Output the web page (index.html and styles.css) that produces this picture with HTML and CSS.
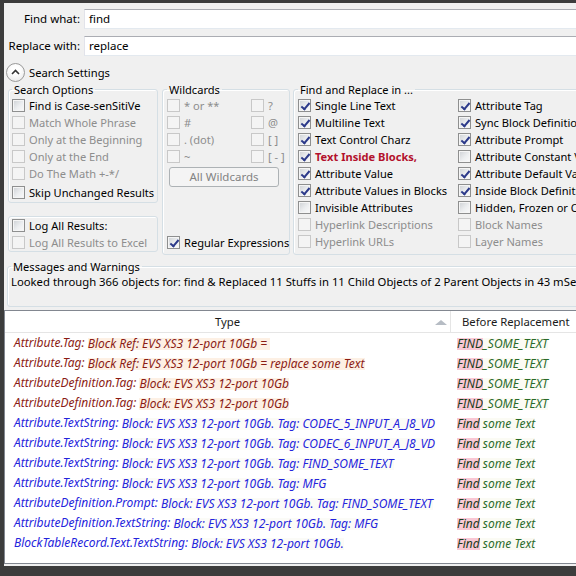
FILE: index.html
```html
<!DOCTYPE html>
<html>
<head>
<meta charset="utf-8">
<link rel="stylesheet" href="styles.css">
</head>
<body>
<div class="win">
  <div class="form">
    <div class="frow"><span class="lbl">Find what:</span><div class="input">find</div></div>
    <div class="frow"><span class="lbl">Replace with:</span><div class="input">replace</div></div>
    <div class="settings">
      <span class="circ"><svg width="9" height="6" viewBox="0 0 9 6"><polyline points="1,5 4.5,1.5 8,5" fill="none" stroke="#333" stroke-width="1.6"/></svg></span>
      <span>Search Settings</span>
    </div>
    <div class="groups">
      <div class="col1">
        <fieldset class="grp so">
          <legend>Search Options</legend>
          <div class="cbr"><span class="cb"></span><span>Find is Case-senSitiVe</span></div>
          <div class="cbr dis"><span class="cb"></span><span>Match Whole Phrase</span></div>
          <div class="cbr dis"><span class="cb"></span><span>Only at the Beginning</span></div>
          <div class="cbr dis"><span class="cb"></span><span>Only at the End</span></div>
          <div class="cbr dis"><span class="cb"></span><span>Do The Math +-*/</span></div>
          <div class="cbr skip"><span class="cb"></span><span>Skip Unchanged Results</span></div>
        </fieldset>
        <fieldset class="grp log">
          <div class="cbr"><span class="cb"></span><span>Log All Results:</span></div>
          <div class="cbr dis"><span class="cb"></span><span>Log All Results to Excel</span></div>
        </fieldset>
      </div>
      <fieldset class="grp wc">
        <legend>Wildcards</legend>
        <div class="wgrid">
          <div class="cbr dis"><span class="cb"></span><span>* or **</span></div>
          <div class="cbr dis"><span class="cb"></span><span>?</span></div>
          <div class="cbr dis"><span class="cb"></span><span>#</span></div>
          <div class="cbr dis"><span class="cb"></span><span>@</span></div>
          <div class="cbr dis"><span class="cb"></span><span>. (dot)</span></div>
          <div class="cbr dis"><span class="cb"></span><span>[ ]</span></div>
          <div class="cbr dis"><span class="cb"></span><span>~</span></div>
          <div class="cbr dis"><span class="cb"></span><span>[ - ]</span></div>
        </div>
        <div class="btn">All Wildcards</div>
        <div class="cbr regex"><span class="cb on"></span><span>Regular Expressions</span></div>
      </fieldset>
      <fieldset class="grp fr">
        <legend>Find and Replace in ...</legend>
        <div class="fgrid">
          <div class="cbr"><span class="cb on"></span><span>Single Line Text</span></div>
          <div class="cbr"><span class="cb on"></span><span>Attribute Tag</span></div>
          <div class="cbr"><span class="cb on"></span><span>Multiline Text</span></div>
          <div class="cbr"><span class="cb on"></span><span>Sync Block Definitions</span></div>
          <div class="cbr"><span class="cb on"></span><span>Text Control Charz</span></div>
          <div class="cbr"><span class="cb on"></span><span>Attribute Prompt</span></div>
          <div class="cbr hot"><span class="cb on"></span><span>Text Inside Blocks,</span></div>
          <div class="cbr"><span class="cb"></span><span>Attribute Constant Values</span></div>
          <div class="cbr"><span class="cb on"></span><span>Attribute Value</span></div>
          <div class="cbr"><span class="cb on"></span><span>Attribute Default Values</span></div>
          <div class="cbr"><span class="cb on"></span><span>Attribute Values in Blocks</span></div>
          <div class="cbr"><span class="cb on"></span><span>Inside Block Definitions</span></div>
          <div class="cbr"><span class="cb"></span><span>Invisible Attributes</span></div>
          <div class="cbr"><span class="cb"></span><span>Hidden, Frozen or Off Layers</span></div>
          <div class="cbr dis"><span class="cb"></span><span>Hyperlink Descriptions</span></div>
          <div class="cbr dis"><span class="cb"></span><span>Block Names</span></div>
          <div class="cbr dis"><span class="cb"></span><span>Hyperlink URLs</span></div>
          <div class="cbr dis"><span class="cb"></span><span>Layer Names</span></div>
        </div>
      </fieldset>
    </div>
    <fieldset class="grp msg">
      <legend>Messages and Warnings</legend>
      <div class="msgtext">Looked through 366 objects for: find &amp; Replaced 11 Stuffs in 11 Child Objects of 2 Parent Objects in 43 mSec</div>
    </fieldset>
  </div>
  <div class="table">
    <div class="thead">
      <div class="th th1">Type<span class="sort"></span></div>
      <div class="th th2">Before Replacement</div>
    </div>
    <div class="tbody">
      <div class="c1 red"><span>Attribute.Tag: </span><span class="hl">Block Ref: EVS XS3 12-port 10Gb = </span></div>
      <div class="c2"><span class="pk">FIND</span><span class="gr">_SOME_TEXT</span></div>
      <div class="c1 red"><span>Attribute.Tag: </span><span class="hl">Block Ref: EVS XS3 12-port 10Gb = replace some Text</span></div>
      <div class="c2"><span class="pk">FIND</span><span class="gr">_SOME_TEXT</span></div>
      <div class="c1 red"><span>AttributeDefinition.Tag: </span><span class="hl">Block: EVS XS3 12-port 10Gb</span></div>
      <div class="c2"><span class="pk">FIND</span><span class="gr">_SOME_TEXT</span></div>
      <div class="c1 red"><span>AttributeDefinition.Tag: </span><span class="hl">Block: EVS XS3 12-port 10Gb</span></div>
      <div class="c2"><span class="pk">FIND</span><span class="gr">_SOME_TEXT</span></div>
      <div class="c1 blue"><span>Attribute.TextString: </span><span class="hl2">Block: EVS XS3 12-port 10Gb. Tag: CODEC_5_INPUT_A_J8_VD</span></div>
      <div class="c2"><span class="pk">Find</span><span class="gr"> some Text</span></div>
      <div class="c1 blue"><span>Attribute.TextString: </span><span class="hl2">Block: EVS XS3 12-port 10Gb. Tag: CODEC_6_INPUT_A_J8_VD</span></div>
      <div class="c2"><span class="pk">Find</span><span class="gr"> some Text</span></div>
      <div class="c1 blue"><span>Attribute.TextString: </span><span class="hl2">Block: EVS XS3 12-port 10Gb. Tag: FIND_SOME_TEXT</span></div>
      <div class="c2"><span class="pk">Find</span><span class="gr"> some Text</span></div>
      <div class="c1 blue"><span>Attribute.TextString: </span><span class="hl2">Block: EVS XS3 12-port 10Gb. Tag: MFG</span></div>
      <div class="c2"><span class="pk">Find</span><span class="gr"> some Text</span></div>
      <div class="c1 blue"><span>AttributeDefinition.Prompt: </span><span class="hl2">Block: EVS XS3 12-port 10Gb. Tag: FIND_SOME_TEXT</span></div>
      <div class="c2"><span class="pk">Find</span><span class="gr"> some Text</span></div>
      <div class="c1 blue"><span>AttributeDefinition.TextString: </span><span class="hl2">Block: EVS XS3 12-port 10Gb. Tag: MFG</span></div>
      <div class="c2"><span class="pk">Find</span><span class="gr"> some Text</span></div>
      <div class="c1 blue"><span>BlockTableRecord.Text.TextString: </span><span class="hl2">Block: EVS XS3 12-port 10Gb.</span></div>
      <div class="c2"><span class="pk">Find</span><span class="gr"> some Text</span></div>
    </div>
  </div>
</div>
</body>
</html>
```
FILE: styles.css
```css
* { box-sizing: border-box; }
html, body { margin: 0; padding: 0; }
body {
  width: 576px;
  height: 576px;
  overflow: hidden;
  background: #f0f0f0;
  font-family: "Noto Sans", "Open Sans", sans-serif;
  font-size: 11.1px;
  color: #000;
}
.win {
  width: 640px;
  height: 576px;
  border-left: 4px solid #3c3c3c;
  border-top: 3px solid #3c3c3c;
  border-bottom: 10px solid #3c3c3c;
  display: flex;
  flex-direction: column;
}
.form { padding-top: 6px; }
.frow {
  display: grid;
  grid-template-columns: 80px 1fr;
  height: 20px;
  margin-bottom: 7px;
  font-size: 11.5px;
}
.lbl {
  text-align: right;
  padding-right: 4px;
  line-height: 20px;
}
.input {
  background: #fff;
  border-top: 1px solid #abadb3;
  border-left: 1px solid #e2e3ea;
  border-bottom: 1px solid #e3e9ef;
  padding-left: 4px;
  line-height: 18px;
}
.settings {
  display: flex;
  align-items: center;
  gap: 4px;
  height: 19px;
  margin-left: 2px;
  font-size: 11.2px;
}
.circ {
  width: 19px;
  height: 19px;
  border-radius: 50%;
  border: 1px solid #9a9a9a;
  background: radial-gradient(circle at 50% 35%, #ffffff 30%, #e4e4e4 100%);
  display: flex;
  align-items: center;
  justify-content: center;
  padding-bottom: 1px;
}
.groups {
  display: flex;
  height: 173px;
}
.col1 {
  margin-left: 4px;
  width: 150px;
  display: flex;
  flex-direction: column;
}
.grp {
  margin: 0;
  border: 1px solid #d5dfe5;
  border-radius: 3px;
  box-shadow: inset 1px 1px 0 #fff;
  padding: 0 0 0 3px;
  min-width: 0;
}
.grp legend {
  padding: 0 2px;
  line-height: 15px;
}
.so { height: 121px; }
.log { margin-top: 13px; height: 36px; }
.cbr {
  display: flex;
  align-items: center;
  gap: 4px;
  height: 17px;
  white-space: nowrap;
}
.skip { margin-top: 2px; }
.cb {
  position: relative;
  flex: none;
  width: 13px;
  height: 13px;
  border: 1px solid #8e8f8f;
  background: linear-gradient(135deg, #cdd0d4 0%, #eceef0 55%, #fafafa 100%);
  box-shadow: inset 0 0 0 1px #f5f5f5;
}
.cb.on::after {
  content: "";
  position: absolute;
  left: 3.5px;
  top: 0.5px;
  width: 3px;
  height: 7px;
  border-right: 2px solid #2c3a8a;
  border-bottom: 2px solid #2c3a8a;
  transform: rotate(40deg);
}
.dis { color: #8d8d8d; }
.dis .cb {
  border-color: #c8c8c8;
  background: #f4f4f4;
  box-shadow: none;
}
.hot { color: #b3102c; font-weight: bold; }
.wc {
  margin-left: 4px;
  width: 128px;
  padding-left: 4px;
  display: flex;
  flex-direction: column;
  padding-bottom: 3px;
}
.wgrid {
  display: grid;
  grid-template-columns: 84px 1fr;
}
.btn {
  margin: 2px 0 0 2px;
  width: 110px;
  height: 20px;
  border: 1px solid #adb2b5;
  border-radius: 3px;
  background: #f4f4f4;
  color: #838383;
  text-align: center;
  line-height: 18px;
  font-size: 11.5px;
}
.regex { margin-top: auto; }
.fr {
  margin-left: 3px;
  width: 320px;
  padding-left: 4px;
}
.fgrid {
  display: grid;
  grid-template-columns: 160px 1fr;
}
.msg {
  margin: 4px 0 0 3px;
  width: 600px;
  padding-bottom: 17px;
}
.msgtext {
  line-height: 15px;
  white-space: nowrap;
  font-size: 11.3px;
}
.table {
  flex: 1;
  margin-top: 3px;
  margin-bottom: 2px;
  background: #fff;
  border: 1px solid #828790;
  border-right: none;
}
.thead {
  display: grid;
  grid-template-columns: 446px 1fr;
  height: 22px;
  border-bottom: 1px solid #e5e5e5;
}
.th {
  line-height: 21px;
  color: #1a1a1a;
  font-size: 11.3px;
}
.th1 {
  position: relative;
  text-align: center;
  border-right: 1px solid #e5e5e5;
}
.th2 { padding-left: 11px; }
.sort {
  position: absolute;
  right: 3px;
  top: 9px;
  width: 0;
  height: 0;
  border-left: 6px solid transparent;
  border-right: 6px solid transparent;
  border-bottom: 5px solid #b6bcc4;
}
.tbody {
  display: grid;
  grid-template-columns: 446px 1fr;
  grid-auto-rows: 20px;
  font-style: italic;
  font-size: 12px;
}
.c1, .c2 {
  white-space: nowrap;
  overflow: hidden;
  line-height: 20px;
}
.c1 { padding-left: 9px; }
.c2 { padding-left: 6px; }
.red { color: #8b1c14; }
.blue { color: #2424dc; }
.hl, .hl2, .pk, .gr {
  display: inline-block;
  line-height: 12px;
  vertical-align: middle;
  white-space: pre;
}
.hl { background: #fdf0e4; }
.hl2 { background: #fbfbf7; }
.pk { background: #f9c8d5; color: #183a18; }
.gr { color: #2a6b2a; background: #fbfbf4; }
```
